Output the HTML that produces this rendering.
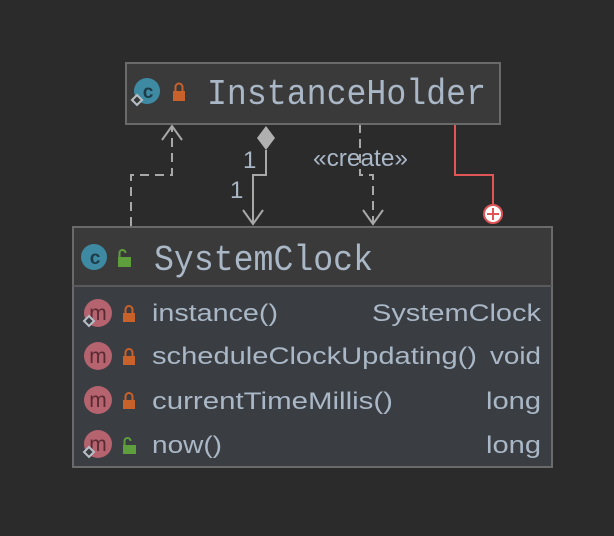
<!DOCTYPE html>
<html><head><style>
html,body{margin:0;padding:0;background:#2b2b2b;}
svg{display:block}
.m{font-family:"Liberation Sans",sans-serif;font-size:24px;fill:#a9b7c6}
.t{font-family:"Liberation Mono",monospace;font-size:36px;fill:#a9b7c6}
</style></head><body>
<svg width="614" height="536" viewBox="0 0 614 536" xmlns="http://www.w3.org/2000/svg">
<rect width="614" height="536" fill="#2b2b2b"/>
<g fill="none" stroke="#a8a8a8" stroke-width="2">
<path d="M131 226 V175 H172 V126" stroke-dasharray="9 6"/>
<path d="M162 140 L172 126 L182 140"/>
<path d="M266 150 V175 H253 V224"/>
<path d="M243 210 L253 224 L263 210"/>
<path d="M360 124 V175 H373 V224" stroke-dasharray="9 6"/>
<path d="M363 210 L373 224 L383 210"/>
</g>
<path d="M266 126 L275 138 L266 150 L257 138 Z" fill="#b0b0b0"/>
<text x="243" y="168" class="m" font-size="22">1</text>
<text x="230" y="198" class="m" font-size="22">1</text>
<text x="313" y="166" class="m" font-size="21" textLength="95" lengthAdjust="spacingAndGlyphs">«create»</text>
<path d="M455 124 V175 H493 V205" fill="none" stroke="#e05555" stroke-width="2"/>
<circle cx="493" cy="214" r="9" fill="#fff" stroke="#e05555" stroke-width="2"/>
<path d="M493 208 V220 M487 214 H499" stroke="#e05555" stroke-width="2"/>
<rect x="126" y="63" width="374" height="61" fill="#3a3a3a" stroke="#6a6a6a" stroke-width="2"/>
<circle cx="147" cy="91" r="13" fill="#3e8aa3"/>
<text x="148" y="98" text-anchor="middle" font-family="Liberation Sans,sans-serif" font-size="19" font-weight="bold" fill="#1e3c48">c</text>
<path d="M137 95 L142 100 L137 105 L132 100 Z" fill="#3a3a3a" stroke="#b8c0c8" stroke-width="2"/>
<rect x="173" y="91" width="12" height="10" fill="#c8612a"/>
<path d="M175.5 91 V87 a3.5 3.5 0 0 1 7 0 V91" fill="none" stroke="#c8612a" stroke-width="2"/>
<text x="207" y="104" class="t" textLength="279" lengthAdjust="spacingAndGlyphs">InstanceHolder</text>
<rect x="73" y="227" width="479" height="240" fill="#3a3d41" stroke="#6a6a6a" stroke-width="2"/>
<rect x="74" y="228" width="477" height="57" fill="#3a3a3a"/>
<line x1="73" y1="286" x2="552" y2="286" stroke="#5a5a5a" stroke-width="2"/>
<circle cx="94" cy="257" r="13" fill="#3e8aa3"/>
<text x="95" y="264" text-anchor="middle" font-family="Liberation Sans,sans-serif" font-size="19" font-weight="bold" fill="#1e3c48">c</text>
<rect x="118" y="257" width="13" height="10" fill="#5e9e3c"/>
<path d="M119.5 257 V253 a3 3 0 0 1 6 0" fill="none" stroke="#5e9e3c" stroke-width="2"/>
<text x="154" y="270" class="t" textLength="219" lengthAdjust="spacingAndGlyphs">SystemClock</text>
<g font-family="Liberation Sans,sans-serif" font-size="21" fill="#5a2a32" text-anchor="middle">
<circle cx="98" cy="313" r="14" fill="#b4636f"/><text x="98" y="320">m</text>
<circle cx="98" cy="356" r="14" fill="#b4636f"/><text x="98" y="363">m</text>
<circle cx="98" cy="400" r="14" fill="#b4636f"/><text x="98" y="407">m</text>
<circle cx="98" cy="444" r="14" fill="#b4636f"/><text x="98" y="451">m</text>
</g>
<path d="M89 316 L94 321 L89 326 L84 321 Z" fill="#3a3d41" stroke="#b8c0c8" stroke-width="2"/>
<path d="M89 447 L94 452 L89 457 L84 452 Z" fill="#3a3d41" stroke="#b8c0c8" stroke-width="2"/>
<g fill="#c8612a">
<rect x="123" y="313" width="12" height="9"/><path d="M125.5 313 V309.5 a3.5 3.5 0 0 1 7 0 V313" fill="none" stroke="#c8612a" stroke-width="2"/>
<rect x="123" y="356" width="12" height="9"/><path d="M125.5 356 V352.5 a3.5 3.5 0 0 1 7 0 V356" fill="none" stroke="#c8612a" stroke-width="2"/>
<rect x="123" y="400" width="12" height="9"/><path d="M125.5 400 V396.5 a3.5 3.5 0 0 1 7 0 V400" fill="none" stroke="#c8612a" stroke-width="2"/>
</g>
<rect x="123" y="445" width="13" height="9" fill="#5e9e3c"/>
<path d="M124.5 445 V441 a3 3 0 0 1 6 0" fill="none" stroke="#5e9e3c" stroke-width="2"/>
<text x="152" y="321" class="m" textLength="126" lengthAdjust="spacingAndGlyphs">instance()</text>
<text x="152" y="364" class="m" textLength="325" lengthAdjust="spacingAndGlyphs">scheduleClockUpdating()</text>
<text x="152" y="409" class="m" textLength="241" lengthAdjust="spacingAndGlyphs">currentTimeMillis()</text>
<text x="152" y="453" class="m" textLength="70" lengthAdjust="spacingAndGlyphs">now()</text>
<text x="541" y="321" class="m" text-anchor="end" textLength="169" lengthAdjust="spacingAndGlyphs">SystemClock</text>
<text x="541" y="364" class="m" text-anchor="end" textLength="51" lengthAdjust="spacingAndGlyphs">void</text>
<text x="541" y="409" class="m" text-anchor="end" textLength="55" lengthAdjust="spacingAndGlyphs">long</text>
<text x="541" y="453" class="m" text-anchor="end" textLength="55" lengthAdjust="spacingAndGlyphs">long</text>
</svg>
</body></html>
